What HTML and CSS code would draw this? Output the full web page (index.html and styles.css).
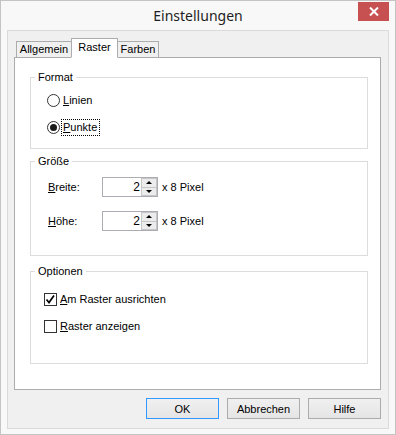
FILE: index.html
```html
<!DOCTYPE html>
<html lang="de">
<head>
    <meta charset="UTF-8">
    <title>Einstellungen</title>
    <link rel="stylesheet" href="styles.css">
</head>
<body>
    <div class="window">
        <div class="titlebar">
            <span class="title">Einstellungen</span>
            <span class="close">
                <svg width="10" height="9" viewBox="0 0 10 9"><path d="M1 0.5 L9 8.5 M9 0.5 L1 8.5" stroke="#fff" stroke-width="2"/></svg>
            </span>
        </div>
        <div class="client">
            <div class="tabs">
                <div class="tab tab-general">Allgemein</div>
                <div class="tab tab-grid active">Raster</div>
                <div class="tab tab-colors">Farben</div>
            </div>
            <div class="panel">
                <!-- Format -->
                <div class="group group-format">
                    <span class="group-title">Format</span>
                    <div class="group-body option-list">
                        <label class="option"><span class="radio"></span><span class="option-text"><u>L</u>inien</span></label>
                        <label class="option"><span class="radio checked"></span><span class="option-text focused"><u>P</u>unkte</span></label>
                    </div>
                </div>
                <!-- Größe -->
                <div class="group group-size">
                    <span class="group-title">Größe</span>
                    <div class="group-body size-rows">
                        <div class="size-row">
                            <span class="size-label"><u>B</u>reite:</span>
                            <span class="spin"><span class="spin-value">2</span><span class="spin-buttons"><span class="spin-up"></span><span class="spin-down"></span></span></span>
                            <span class="size-unit">x 8 Pixel</span>
                        </div>
                        <div class="size-row">
                            <span class="size-label"><u>H</u>öhe:</span>
                            <span class="spin"><span class="spin-value">2</span><span class="spin-buttons"><span class="spin-up"></span><span class="spin-down"></span></span></span>
                            <span class="size-unit">x 8 Pixel</span>
                        </div>
                    </div>
                </div>
                <!-- Optionen -->
                <div class="group group-options">
                    <span class="group-title">Optionen</span>
                    <div class="group-body check-list">
                        <label class="option"><span class="checkbox checked"><svg width="11" height="11" viewBox="0 0 11 11"><path d="M1.5 5.5 L4 8.5 L9 1.5" fill="none" stroke="#000" stroke-width="1.7"/></svg></span><span class="option-text"><u>A</u>m Raster ausrichten</span></label>
                        <label class="option"><span class="checkbox"></span><span class="option-text"><u>R</u>aster anzeigen</span></label>
                    </div>
                </div>
            </div>
            <div class="buttons">
                <button class="btn btn-default">OK</button>
                <button class="btn">Abbrechen</button>
                <button class="btn">Hilfe</button>
            </div>
        </div>
    </div>
</body>
</html>
```

FILE: styles.css
```css
body {
    margin: 0;
    background-color: #ffffff;
    font-family: "Liberation Sans", Arial, sans-serif;
    font-size: 11px;
    color: #000;
}
.window {
    width: 396px;
    height: 435px;
    box-sizing: border-box;
    border: 1px solid #c4c4c4;
    background-color: #f8f8f8;
    padding: 0 6px 6px 6px;
    display: flex;
    flex-direction: column;
}
.titlebar {
    height: 29px;
    display: grid;
    grid-template-columns: 1fr auto 1fr;
}
.title {
    grid-column: 2;
    font-family: "Noto Sans", "Open Sans", sans-serif;
    font-size: 14px;
    line-height: 29px;
    color: #1e1e1e;
}
.close {
    grid-column: 3;
    justify-self: end;
    margin-top: 1px;
    width: 31px;
    height: 19px;
    background-color: #c75050;
    display: flex;
    align-items: center;
    justify-content: center;
}
.client {
    flex: 1;
    border: 1px solid #dadada;
    background-color: #f0f0f0;
    padding: 7px 7px 9px 6px;
    display: flex;
    flex-direction: column;
}
.tabs {
    height: 20px;
    display: flex;
    align-items: flex-end;
    padding-left: 2px;
    margin-bottom: -1px;
    position: relative;
    z-index: 1;
}
.tab {
    box-sizing: border-box;
    height: 17px;
    border: 1px solid #acacac;
    background-color: #f0f0f0;
    line-height: 15px;
    text-align: center;
}
.tab-general { width: 56px; }
.tab-grid { width: 47px; margin-left: -1px; }
.tab-colors { width: 42px; margin-left: -1px; }
.tab.active {
    height: 20px;
    background-color: #fff;
    border-bottom-color: #fff;
    line-height: 17px;
    position: relative;
    z-index: 2;
}
.panel {
    height: 333px;
    box-sizing: border-box;
    border: 1px solid #acacac;
    background-color: #fff;
    padding: 19px 12px 0 15px;
}
.group {
    border: 1px solid #dcdcdc;
    box-sizing: border-box;
    display: flex;
    flex-direction: column;
    align-items: flex-start;
}
.group-format { height: 72px; }
.group-size { height: 95px; margin-top: 12px; }
.group-options { height: 93px; margin-top: 15px; }
.group-title {
    margin: -7px 0 0 4px;
    padding: 0 3px;
    background-color: #fff;
    line-height: 13px;
}
.option-list {
    padding: 8px 0 0 16px;
    display: grid;
    grid-auto-rows: 17px;
    row-gap: 10px;
}
.check-list {
    padding: 13px 0 0 13px;
    display: grid;
    grid-auto-rows: 17px;
    row-gap: 10px;
}
.option {
    display: flex;
    align-items: center;
}
.radio {
    width: 13px;
    height: 13px;
    box-sizing: border-box;
    border: 1px solid #333;
    border-radius: 50%;
    background-color: #fff;
    margin-right: 3px;
    display: flex;
    align-items: center;
    justify-content: center;
}
.radio.checked::before {
    content: "";
    width: 7px;
    height: 7px;
    border-radius: 50%;
    background-color: #1b1b1b;
}
.checkbox {
    width: 13px;
    height: 13px;
    box-sizing: border-box;
    border: 1px solid #333;
    background-color: #fff;
    margin-right: 3px;
    display: flex;
    align-items: center;
    justify-content: center;
}
.option-text {
    line-height: 13px;
}
.option-text.focused {
    outline: 1px dotted #000;
    outline-offset: 1px;
    padding: 0 1px 0 0;
}
.size-rows {
    padding: 9px 0 0 17px;
    display: grid;
    grid-auto-rows: 20px;
    row-gap: 14px;
}
.size-row {
    display: flex;
    align-items: center;
}
.size-label {
    width: 54px;
}
.spin {
    width: 56px;
    height: 20px;
    box-sizing: border-box;
    border: 1px solid #abadb3;
    background-color: #fff;
    display: flex;
}
.spin-value {
    flex: 1;
    text-align: right;
    line-height: 18px;
    font-size: 12px;
    padding-right: 1px;
}
.spin-buttons {
    width: 16px;
    display: flex;
    flex-direction: column;
}
.spin-up, .spin-down {
    flex: 1;
    border: 1px solid #c6c6c6;
    background-color: #ececec;
    display: flex;
    align-items: center;
    justify-content: center;
}
.spin-up { border-bottom: none; }
.spin-up::before {
    content: "";
    border-left: 3px solid transparent;
    border-right: 3px solid transparent;
    border-bottom: 3px solid #000;
}
.spin-down::before {
    content: "";
    border-left: 3px solid transparent;
    border-right: 3px solid transparent;
    border-top: 3px solid #000;
}
.size-unit {
    margin-left: 4px;
}
.buttons {
    margin-top: 8px;
    display: flex;
    justify-content: flex-end;
    gap: 8px;
}
.btn {
    width: 73px;
    height: 21px;
    box-sizing: border-box;
    border: 1px solid #acacac;
    background: linear-gradient(#f0f0f0, #e5e5e5);
    font-family: "Liberation Sans", Arial, sans-serif;
    font-size: 11px;
    color: #000;
    padding: 0;
}
.btn-default {
    border-color: #3399ff;
}
```
